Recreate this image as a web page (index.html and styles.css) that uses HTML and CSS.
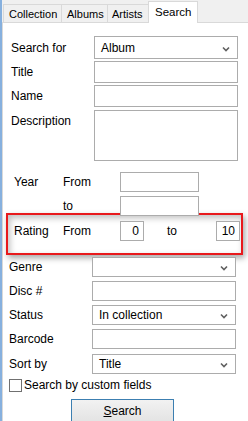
FILE: index.html
```html
<!DOCTYPE html>
<html lang="en">

<head>
  <meta charset="UTF-8">
  <meta name="viewport" content="width=device-width, initial-scale=1.0">
  <title>Search</title>
  <link rel="stylesheet" href="styles.css">
</head>

<body>

  <div id="window">
    <div class="tabs">
      <span class="tab tab-collection">Collection</span>
      <span class="tab tab-albums">Albums</span>
      <span class="tab tab-artists">Artists</span>
      <span class="tab active">Search</span>
    </div>

    <div class="panel">
      <div class="row row-first">
        <label>Search for</label>
        <div class="control select tall">Album
          <svg class="arrow" width="8" height="6" viewBox="0 0 8 6"><path d="M1 1.5 L4 4.5 L7 1.5" fill="none" stroke="#606060" stroke-width="1.6"/></svg>
        </div>
      </div>
      <div class="row">
        <label>Title</label>
        <div class="control input"></div>
      </div>
      <div class="row row-name">
        <label>Name</label>
        <div class="control input"></div>
      </div>
      <div class="row row-desc">
        <label>Description</label>
        <div class="control textarea"></div>
      </div>

      <div class="row range">
        <label class="sub">Year</label>
        <span class="word">From</span>
        <div class="box year"></div>
      </div>
      <div class="row range range-to">
        <label class="sub"></label>
        <span class="word">to</span>
        <div class="box year"></div>
      </div>

      <!-- red marker round the rating row -->
      <div class="marked">
        <div class="row range">
          <label class="sub">Rating</label>
          <span class="word">From</span>
          <div class="box num">0</div>
          <span class="word to">to</span>
          <div class="box num">10</div>
        </div>
      </div>

      <div class="lower">
        <div class="row">
          <label>Genre</label>
          <div class="control select">
            <svg class="arrow" width="8" height="6" viewBox="0 0 8 6"><path d="M1 1.5 L4 4.5 L7 1.5" fill="none" stroke="#606060" stroke-width="1.6"/></svg>
          </div>
        </div>
        <div class="row">
          <label>Disc #</label>
          <div class="control input"></div>
        </div>
        <div class="row">
          <label>Status</label>
          <div class="control select">In collection
            <svg class="arrow" width="8" height="6" viewBox="0 0 8 6"><path d="M1 1.5 L4 4.5 L7 1.5" fill="none" stroke="#606060" stroke-width="1.6"/></svg>
          </div>
        </div>
        <div class="row row-barcode">
          <label>Barcode</label>
          <div class="control input"></div>
        </div>
        <div class="row">
          <label>Sort by</label>
          <div class="control select">Title
            <svg class="arrow" width="8" height="6" viewBox="0 0 8 6"><path d="M1 1.5 L4 4.5 L7 1.5" fill="none" stroke="#606060" stroke-width="1.6"/></svg>
          </div>
        </div>
        <div class="check">
          <span class="checkbox"></span>
          <span>Search by custom fields</span>
        </div>
        <div class="actions">
          <button class="btn"><u>S</u>earch</button>
        </div>
      </div>
    </div>
  </div>

</body>

</html>
```

FILE: styles.css
```css
* {
  box-sizing: border-box;
}

body {
  margin: 0;
  width: 248px;
  height: 421px;
  overflow: hidden;
  background: #fff;
  font-family: "Liberation Sans", Arial, sans-serif;
  font-size: 12px;
  color: #000;
}

#window {
  height: 421px;
  border-left: 2px solid #86b0de;
  background: #f0f0f0;
}

.tabs {
  display: flex;
  align-items: flex-end;
  height: 22px;
  padding-left: 1px;
}

.tab {
  height: 18px;
  padding: 1px 0 0 5px;
  border: 1px solid #d9d9d9;
  border-bottom: none;
  margin-right: -1px;
  background: #f0f0f0;
  font-size: 11px;
  line-height: 16px;
  white-space: nowrap;
  overflow: hidden;
}

.tab-collection {
  width: 59px;
}

.tab-albums {
  width: 47px;
}

.tab-artists {
  width: 42px;
  padding-left: 4px;
}

.tab.active {
  position: relative;
  height: 22px;
  width: 50px;
  padding-top: 2px;
  padding-left: 6px;
  background: #fff;
  margin-bottom: -1px;
  font-size: 11.5px;
}

.panel {
  height: 400px;
  border-top: 1px solid #d9d9d9;
  border-left: 1px solid #d9d9d9;
  background: #fff;
  padding: 13px 0 0 5px;
}

.row {
  display: flex;
  align-items: center;
  height: 22px;
  margin-bottom: 2px;
}

.row label {
  width: 86px;
  padding-left: 3px;
}

.control {
  width: 144px;
  height: 100%;
  border: 1px solid #acacac;
  background: #fff;
}

.select {
  display: flex;
  align-items: center;
  justify-content: space-between;
  padding: 0 7px 0 6px;
}

.select .arrow {
  margin-left: auto;
  margin-top: 2px;
}

.row-first {
  height: 23px;
}

.row-name {
  margin-bottom: 3px;
}

.row-desc {
  height: 51px;
  align-items: flex-start;
  margin-bottom: 11px;
}

.row-desc label {
  padding-top: 4px;
}

.range {
  height: 20px;
  margin-bottom: 4px;
}

.range-to {
  margin-bottom: 0;
}

.range .sub {
  width: 55px;
  padding-left: 6px;
}

.word {
  width: 57px;
}

.word.to {
  width: 49px;
  margin-left: 23px;
}

.box {
  height: 20px;
  border: 1px solid #acacac;
  background: #fff;
}

.box.year {
  width: 79px;
}

.box.num {
  width: 24px;
  text-align: right;
  padding-right: 4px;
  line-height: 18px;
}

.marked {
  width: 237px;
  height: 42px;
  margin: -3px 0 0 -2px;
  padding: 6px 0 0 0;
  border: 2px solid #e8191c;
  box-shadow: 2px 3px 6px rgba(0, 0, 0, 0.35), inset 2px 3px 6px rgba(0, 0, 0, 0.25);
}

.lower {
  margin: 2px 0 0 -2px;
}

.lower .row {
  height: 20px;
  margin-bottom: 4px;
}

.lower .row-barcode {
  margin-bottom: 5px;
}

.check {
  display: flex;
  align-items: center;
  height: 14px;
  margin: 0 0 7px 3px;
}

.checkbox {
  width: 13px;
  height: 13px;
  border: 1px solid #707070;
  margin-right: 2px;
  background: #fff;
}

.actions {
  padding-left: 65px;
}

.btn {
  width: 103px;
  height: 24px;
  border: 1px solid #3c7fb1;
  background: linear-gradient(#f2f2f2, #e3e3e3);
  font-family: inherit;
  font-size: 12px;
  color: #000;
  padding: 0;
}
```
